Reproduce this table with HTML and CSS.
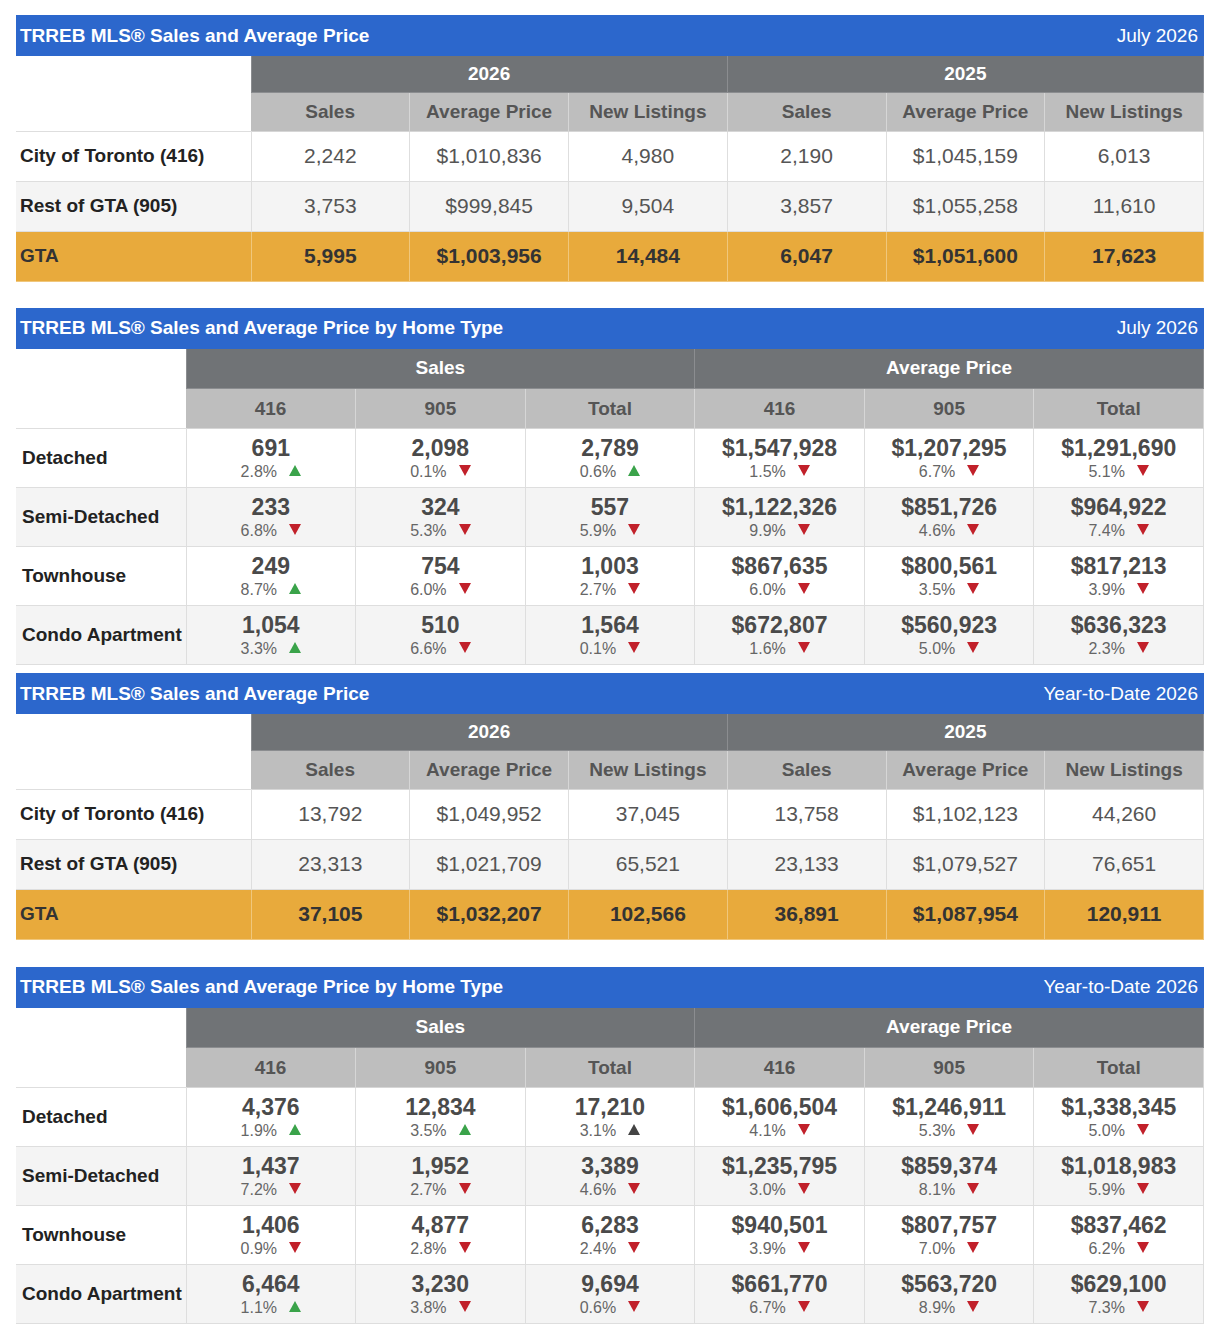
FILE: index.html
```html
<html>
<head>
    <title>TRREB MLS Sales and Average Price</title>
    <meta name="viewport" content="width=device-width, initial-scale=1.0">
    <link rel="stylesheet" href="styles.css">
</head>
<body>
<div class="page">

    <!-- Monthly summary by region -->
    <section class="report report-first">
        <div class="report-bar">
            <span class="report-title">TRREB MLS® Sales and Average Price</span>
            <span class="report-date">July 2026</span>
        </div>
        <table class="grid region">
            <colgroup><col class="col-label"><col><col><col><col><col><col></colgroup>
            <thead>
                <tr class="head-top">
                    <th class="corner" rowspan="2"></th>
                    <th colspan="3">2026</th>
                    <th colspan="3">2025</th>
                </tr>
                <tr class="head-sub">
                    <th>Sales</th><th>Average Price</th><th>New Listings</th>
                    <th>Sales</th><th>Average Price</th><th>New Listings</th>
                </tr>
            </thead>
            <tbody>
                <tr>
                    <td class="label">City of Toronto (416)</td>
                    <td>2,242</td><td>$1,010,836</td><td>4,980</td>
                    <td>2,190</td><td>$1,045,159</td><td>6,013</td>
                </tr>
                <tr>
                    <td class="label">Rest of GTA (905)</td>
                    <td>3,753</td><td>$999,845</td><td>9,504</td>
                    <td>3,857</td><td>$1,055,258</td><td>11,610</td>
                </tr>
                <tr class="total">
                    <td class="label">GTA</td>
                    <td>5,995</td><td>$1,003,956</td><td>14,484</td>
                    <td>6,047</td><td>$1,051,600</td><td>17,623</td>
                </tr>
            </tbody>
        </table>
    </section>

    <!-- Monthly by home type -->
    <section class="report report-tight">
        <div class="report-bar">
            <span class="report-title">TRREB MLS® Sales and Average Price by Home Type</span>
            <span class="report-date">July 2026</span>
        </div>
        <table class="grid types">
            <colgroup><col class="col-label"><col><col><col><col><col><col></colgroup>
            <thead>
                <tr class="head-top">
                    <th class="corner" rowspan="2"></th>
                    <th colspan="3">Sales</th>
                    <th colspan="3">Average Price</th>
                </tr>
                <tr class="head-sub">
                    <th>416</th><th>905</th><th>Total</th>
                    <th>416</th><th>905</th><th>Total</th>
                </tr>
            </thead>
            <tbody>
                <tr>
                    <td class="label">Detached</td>
                    <td><div class="num">691</div><div class="pct">2.8%<span class="arrow up"></span></div></td>
                    <td><div class="num">2,098</div><div class="pct">0.1%<span class="arrow down"></span></div></td>
                    <td><div class="num">2,789</div><div class="pct">0.6%<span class="arrow up"></span></div></td>
                    <td><div class="num">$1,547,928</div><div class="pct">1.5%<span class="arrow down"></span></div></td>
                    <td><div class="num">$1,207,295</div><div class="pct">6.7%<span class="arrow down"></span></div></td>
                    <td><div class="num">$1,291,690</div><div class="pct">5.1%<span class="arrow down"></span></div></td>
                </tr>
                <tr>
                    <td class="label">Semi-Detached</td>
                    <td><div class="num">233</div><div class="pct">6.8%<span class="arrow down"></span></div></td>
                    <td><div class="num">324</div><div class="pct">5.3%<span class="arrow down"></span></div></td>
                    <td><div class="num">557</div><div class="pct">5.9%<span class="arrow down"></span></div></td>
                    <td><div class="num">$1,122,326</div><div class="pct">9.9%<span class="arrow down"></span></div></td>
                    <td><div class="num">$851,726</div><div class="pct">4.6%<span class="arrow down"></span></div></td>
                    <td><div class="num">$964,922</div><div class="pct">7.4%<span class="arrow down"></span></div></td>
                </tr>
                <tr>
                    <td class="label">Townhouse</td>
                    <td><div class="num">249</div><div class="pct">8.7%<span class="arrow up"></span></div></td>
                    <td><div class="num">754</div><div class="pct">6.0%<span class="arrow down"></span></div></td>
                    <td><div class="num">1,003</div><div class="pct">2.7%<span class="arrow down"></span></div></td>
                    <td><div class="num">$867,635</div><div class="pct">6.0%<span class="arrow down"></span></div></td>
                    <td><div class="num">$800,561</div><div class="pct">3.5%<span class="arrow down"></span></div></td>
                    <td><div class="num">$817,213</div><div class="pct">3.9%<span class="arrow down"></span></div></td>
                </tr>
                <tr>
                    <td class="label">Condo Apartment</td>
                    <td><div class="num">1,054</div><div class="pct">3.3%<span class="arrow up"></span></div></td>
                    <td><div class="num">510</div><div class="pct">6.6%<span class="arrow down"></span></div></td>
                    <td><div class="num">1,564</div><div class="pct">0.1%<span class="arrow down"></span></div></td>
                    <td><div class="num">$672,807</div><div class="pct">1.6%<span class="arrow down"></span></div></td>
                    <td><div class="num">$560,923</div><div class="pct">5.0%<span class="arrow down"></span></div></td>
                    <td><div class="num">$636,323</div><div class="pct">2.3%<span class="arrow down"></span></div></td>
                </tr>
            </tbody>
        </table>
    </section>

    <!-- Year-to-date by region -->
    <section class="report report-gap">
        <div class="report-bar">
            <span class="report-title">TRREB MLS® Sales and Average Price</span>
            <span class="report-date">Year-to-Date 2026</span>
        </div>
        <table class="grid region">
            <colgroup><col class="col-label"><col><col><col><col><col><col></colgroup>
            <thead>
                <tr class="head-top">
                    <th class="corner" rowspan="2"></th>
                    <th colspan="3">2026</th>
                    <th colspan="3">2025</th>
                </tr>
                <tr class="head-sub">
                    <th>Sales</th><th>Average Price</th><th>New Listings</th>
                    <th>Sales</th><th>Average Price</th><th>New Listings</th>
                </tr>
            </thead>
            <tbody>
                <tr>
                    <td class="label">City of Toronto (416)</td>
                    <td>13,792</td><td>$1,049,952</td><td>37,045</td>
                    <td>13,758</td><td>$1,102,123</td><td>44,260</td>
                </tr>
                <tr>
                    <td class="label">Rest of GTA (905)</td>
                    <td>23,313</td><td>$1,021,709</td><td>65,521</td>
                    <td>23,133</td><td>$1,079,527</td><td>76,651</td>
                </tr>
                <tr class="total">
                    <td class="label">GTA</td>
                    <td>37,105</td><td>$1,032,207</td><td>102,566</td>
                    <td>36,891</td><td>$1,087,954</td><td>120,911</td>
                </tr>
            </tbody>
        </table>
    </section>

    <!-- Year-to-date by home type -->
    <section class="report">
        <div class="report-bar">
            <span class="report-title">TRREB MLS® Sales and Average Price by Home Type</span>
            <span class="report-date">Year-to-Date 2026</span>
        </div>
        <table class="grid types">
            <colgroup><col class="col-label"><col><col><col><col><col><col></colgroup>
            <thead>
                <tr class="head-top">
                    <th class="corner" rowspan="2"></th>
                    <th colspan="3">Sales</th>
                    <th colspan="3">Average Price</th>
                </tr>
                <tr class="head-sub">
                    <th>416</th><th>905</th><th>Total</th>
                    <th>416</th><th>905</th><th>Total</th>
                </tr>
            </thead>
            <tbody>
                <tr>
                    <td class="label">Detached</td>
                    <td><div class="num">4,376</div><div class="pct">1.9%<span class="arrow up"></span></div></td>
                    <td><div class="num">12,834</div><div class="pct">3.5%<span class="arrow up"></span></div></td>
                    <td><div class="num">17,210</div><div class="pct">3.1%<span class="arrow flat"></span></div></td>
                    <td><div class="num">$1,606,504</div><div class="pct">4.1%<span class="arrow down"></span></div></td>
                    <td><div class="num">$1,246,911</div><div class="pct">5.3%<span class="arrow down"></span></div></td>
                    <td><div class="num">$1,338,345</div><div class="pct">5.0%<span class="arrow down"></span></div></td>
                </tr>
                <tr>
                    <td class="label">Semi-Detached</td>
                    <td><div class="num">1,437</div><div class="pct">7.2%<span class="arrow down"></span></div></td>
                    <td><div class="num">1,952</div><div class="pct">2.7%<span class="arrow down"></span></div></td>
                    <td><div class="num">3,389</div><div class="pct">4.6%<span class="arrow down"></span></div></td>
                    <td><div class="num">$1,235,795</div><div class="pct">3.0%<span class="arrow down"></span></div></td>
                    <td><div class="num">$859,374</div><div class="pct">8.1%<span class="arrow down"></span></div></td>
                    <td><div class="num">$1,018,983</div><div class="pct">5.9%<span class="arrow down"></span></div></td>
                </tr>
                <tr>
                    <td class="label">Townhouse</td>
                    <td><div class="num">1,406</div><div class="pct">0.9%<span class="arrow down"></span></div></td>
                    <td><div class="num">4,877</div><div class="pct">2.8%<span class="arrow down"></span></div></td>
                    <td><div class="num">6,283</div><div class="pct">2.4%<span class="arrow down"></span></div></td>
                    <td><div class="num">$940,501</div><div class="pct">3.9%<span class="arrow down"></span></div></td>
                    <td><div class="num">$807,757</div><div class="pct">7.0%<span class="arrow down"></span></div></td>
                    <td><div class="num">$837,462</div><div class="pct">6.2%<span class="arrow down"></span></div></td>
                </tr>
                <tr>
                    <td class="label">Condo Apartment</td>
                    <td><div class="num">6,464</div><div class="pct">1.1%<span class="arrow up"></span></div></td>
                    <td><div class="num">3,230</div><div class="pct">3.8%<span class="arrow down"></span></div></td>
                    <td><div class="num">9,694</div><div class="pct">0.6%<span class="arrow down"></span></div></td>
                    <td><div class="num">$661,770</div><div class="pct">6.7%<span class="arrow down"></span></div></td>
                    <td><div class="num">$563,720</div><div class="pct">8.9%<span class="arrow down"></span></div></td>
                    <td><div class="num">$629,100</div><div class="pct">7.3%<span class="arrow down"></span></div></td>
                </tr>
            </tbody>
        </table>
    </section>

</div>
</body>
</html>
```

FILE: styles.css
```css
body {
    margin: 0;
    background: #ffffff;
    font-family: "Liberation Sans", Arial, sans-serif;
    color: #222;
}

.page {
    width: 1188px;
    padding: 15px 0 0 16px;
}

.report-first {
    margin-bottom: 26px;
}

.report-gap {
    margin-bottom: 27px;
}

.report-tight {
    margin-bottom: 8px;
}

.report-bar {
    display: flex;
    justify-content: space-between;
    align-items: center;
    height: 41px;
    padding: 0 6px 0 4px;
    background: #2c67cc;
    color: #ffffff;
    font-size: 19px;
    box-sizing: border-box;
}

.report-title {
    font-weight: bold;
}

.grid {
    width: 100%;
    border-collapse: collapse;
    table-layout: fixed;
    font-size: 19px;
}

.grid th,
.grid td {
    padding: 0;
    text-align: center;
    border: 1px solid #dedede;
}

.grid th:first-child,
.grid td:first-child {
    border-left: none;
}

.region .col-label {
    width: 235px;
}

.types .col-label {
    width: 170px;
}

.head-top th {
    background: #707376;
    color: #ffffff;
    font-weight: bold;
    border-color: #8b8d90;
    border-top: none;
}

.head-sub th {
    background: #bebebe;
    color: #555555;
    font-weight: bold;
    border-color: #d6d6d6;
}

.grid th.corner {
    background: #ffffff;
    border-top: none;
    border-left: none;
    border-right: none;
    border-bottom: 1px solid #dedede;
}

.region .head-top th {
    height: 36px;
}

.region .head-sub th {
    height: 39px;
}

.region tbody td {
    height: 50px;
    font-size: 21px;
    color: #555555;
}

.types .head-top th,
.types .head-sub th {
    height: 40px;
}

.types tbody td {
    height: 59px;
}

.grid tbody tr:nth-child(even) td {
    background: #f4f4f4;
}

.grid td.label {
    text-align: left;
    padding-left: 4px;
    font-size: 19px;
    font-weight: bold;
    color: #222222;
}

.types td.label {
    padding-left: 6px;
}

.region tr.total td {
    background: #e8aa3c;
    color: #333333;
    font-weight: bold;
    border-color: #f0c77c;
}

.num {
    font-size: 23px;
    font-weight: bold;
    color: #4a4a4a;
    line-height: 25px;
}

.pct {
    margin-top: 2px;
    font-size: 16px;
    color: #666666;
    line-height: 18px;
}

.arrow {
    display: inline-block;
    width: 0;
    height: 0;
    margin-left: 12px;
    border-left: 6px solid transparent;
    border-right: 6px solid transparent;
    vertical-align: 1px;
}

.arrow.up {
    border-bottom: 11px solid #3aa34a;
}

.arrow.flat {
    border-bottom: 11px solid #444444;
}

.arrow.down {
    border-top: 11px solid #c1202a;
}
```
